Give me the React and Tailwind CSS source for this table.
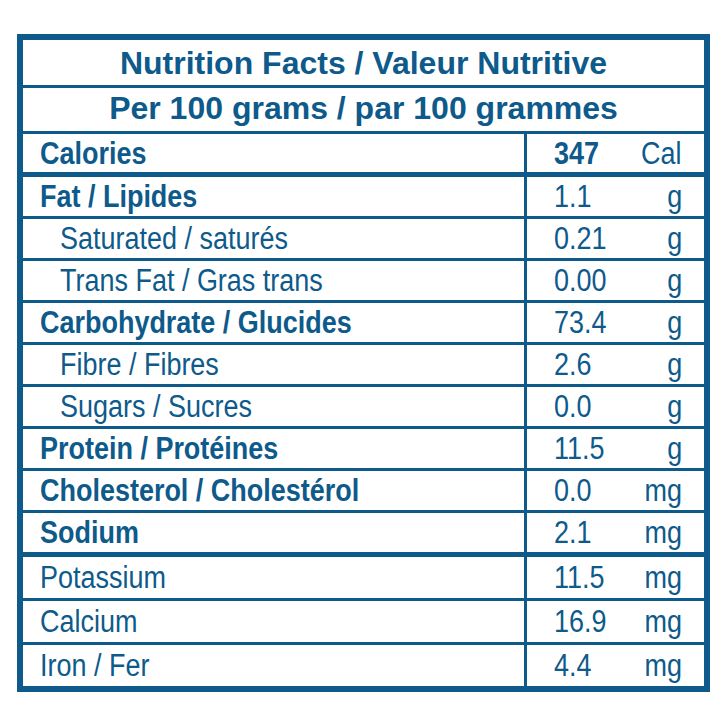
const rows = [
  { label: "Fat / Lipides", value: "1.1", unit: "g", bold: true },
  { label: "Saturated / saturés", value: "0.21", unit: "g", indent: true },
  { label: "Trans Fat / Gras trans", value: "0.00", unit: "g", indent: true },
  { label: "Carbohydrate / Glucides", value: "73.4", unit: "g", bold: true },
  { label: "Fibre / Fibres", value: "2.6", unit: "g", indent: true },
  { label: "Sugars / Sucres", value: "0.0", unit: "g", indent: true },
  { label: "Protein / Protéines", value: "11.5", unit: "g", bold: true },
  { label: "Cholesterol / Cholestérol", value: "0.0", unit: "mg", bold: true },
  { label: "Sodium", value: "2.1", unit: "mg", bold: true, last: true },
];

const minerals = [
  { label: "Potassium", value: "11.5", unit: "mg" },
  { label: "Calcium", value: "16.9", unit: "mg" },
  { label: "Iron / Fer", value: "4.4", unit: "mg", last: true },
];

function Row({ label, value, unit, bold, indent, last, height, valueBold }) {
  return (
    <div
      className={
        "flex " +
        height +
        (last ? "" : " border-b-[3px] border-[#0d5a8b]")
      }
    >
      <div
        className={
          "w-[504px] shrink-0 border-r-[3px] border-[#0d5a8b] flex items-center " +
          (indent ? "pl-[37px]" : "pl-[17px]") +
          (bold ? " font-bold" : "")
        }
      >
        <span className="inline-block whitespace-nowrap origin-left scale-x-[0.87]">{label}</span>
      </div>
      <div className="flex-1 flex items-center justify-between pl-[27px] pr-[22px]">
        <span className={"inline-block origin-left scale-x-[0.87]" + (valueBold ? " font-bold" : "")}>
          {value}
        </span>
        <span className="inline-block origin-right scale-x-[0.87]">{unit}</span>
      </div>
    </div>
  );
}

export default function App() {
  return (
    <div className="w-[727px] h-[727px] bg-white pt-[34px] pl-[17px] text-[#0d5a8b] font-['Liberation_Sans',Arial,sans-serif]">
      <div className="w-[693px] h-[658px] border-[6px] border-[#0d5a8b] flex flex-col">
        {/* Header */}
        <div className="h-[48px] border-b-[3px] border-[#0d5a8b] flex items-center justify-center text-[32px] font-bold leading-none">
          Nutrition Facts / Valeur Nutritive
        </div>
        <div className="h-[46px] border-b-[3px] border-[#0d5a8b] flex items-center justify-center text-[32px] font-bold leading-none pb-[3px]">
          Per 100 grams / par 100 grammes
        </div>

        <div className="text-[31px] leading-none">
          <div className="border-b-[5px] border-[#0d5a8b]">
            <Row label="Calories" value="347" unit="Cal" bold valueBold last height="h-[38px]" />
          </div>

          <div className="border-b-[5px] border-[#0d5a8b]">
            {rows.map((r) => (
              <Row key={r.label} {...r} height={r.last ? "h-[39px]" : "h-[42px]"} />
            ))}
          </div>

          {minerals.map((r) => (
            <Row key={r.label} {...r} height={r.last ? "h-[41px]" : "h-[44px]"} />
          ))}
        </div>
      </div>
    </div>
  );
}
